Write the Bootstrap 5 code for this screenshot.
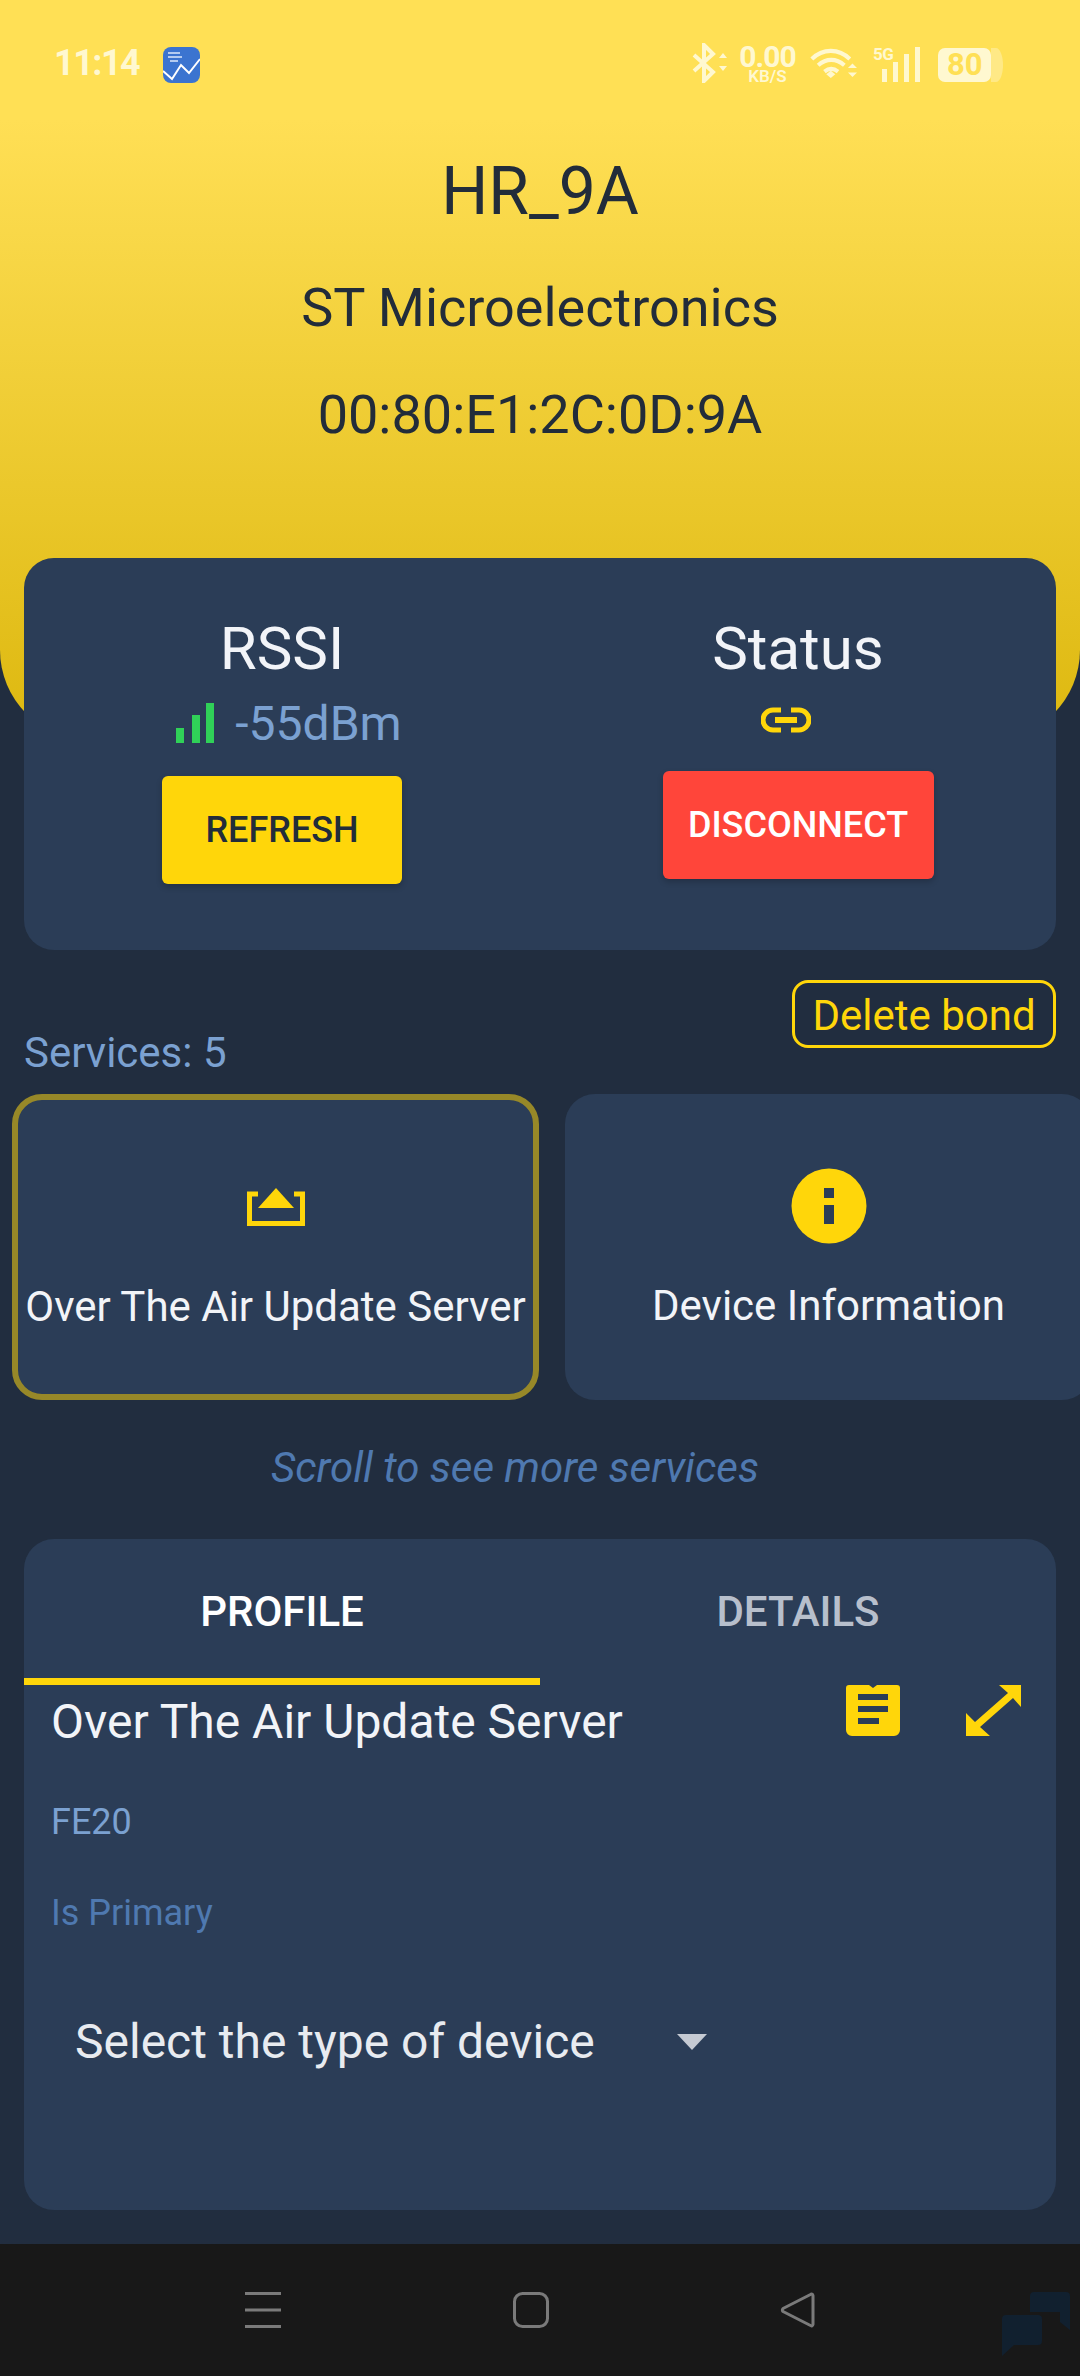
<!DOCTYPE html>
<html lang="en">
<head>
<meta charset="utf-8">
<title>HR_9A</title>
<link href="https://cdn.jsdelivr.net/npm/bootstrap@5.3.0/dist/css/bootstrap.min.css" rel="stylesheet">
<style>
html,body{margin:0;padding:0}
body{width:1080px;height:2376px;overflow:hidden;background:#212d3f;font-family:Roboto,"Liberation Sans",sans-serif;color:#f2f4f8}
.phone{width:1080px;height:2376px;display:flex;flex-direction:column;position:relative}
.hero{height:740px;flex:none;background:linear-gradient(180deg,#ffdf55 120px,#ddb80f 740px);border-radius:0 0 90px 90px}
.statusline{height:120px;background:#ffe055;padding:0 77px 0 54px;color:#fff8d0}
.clock{font-size:36px;font-weight:700;line-height:37px;width:109px;margin-top:45px;letter-spacing:-1.500px}
.appicon{margin-top:47px}
.stat-right{margin-top:43px;height:40px}
.netspeed{width:59px;margin:-1px 13px 0 8px;text-align:center;font-weight:600}
.netspeed b{display:block;font-size:30px;line-height:25px;font-weight:700;margin-top:2px;letter-spacing:-1px}
.netspeed i{display:block;font-size:17px;line-height:14px;font-style:normal;font-weight:600}
.gen{position:relative;width:48px;height:36px;margin:4px 0 0 16px}
.gen span{position:absolute;left:0;top:0;font-size:17px;line-height:15px;font-weight:700;letter-spacing:-.5px}
.batt{margin:5px 0 0 17px;width:65px;height:34px;position:relative}
.batt span{position:absolute;left:9px;top:0;font-size:31px;line-height:34px;font-weight:700;color:#ffe055}
.devname{text-align:center;color:#222c3a}
.devname h1{font-size:66px;font-weight:400;line-height:76px;margin:34px 0 0}
.devname p{font-size:54px;line-height:60px;margin:0}
.devname .vendor{margin-top:48px}
.devname .mac{margin-top:47px}
.panel{background:#2b3d57;border:0;border-radius:30px;margin:0 24px;color:#f2f4f8}
.signal{margin-top:-182px;height:392px;flex:none}
.sig-col{width:516px;text-align:center}
.sig-title{font-size:60px;line-height:68px;margin-top:57px}
.rssi-line{height:50px;margin:16px 0 0 14px}
.rssi-bars{margin-bottom:6px}
.rssi-value{font-size:48px;line-height:50px;color:#7ba1d1;margin-left:21px}
.act{border:0;border-radius:6px;font-size:36px;font-weight:500;line-height:40px;height:108px;box-shadow:0 3px 6px rgba(0,0,0,.2);padding:0}
.act-y{background:#ffd60a;color:#222c3a;width:240px;margin-top:27px}
.act-r{background:#ff453a;color:#fff;width:271px;margin-top:29px}
.link-slot{height:61px;margin-top:-2px;padding-top:26px}
.link-glyph{margin-left:-24px}
.bond-row{padding:30px 24px 0;flex:none;height:144px}
.svc-count{font-size:42px;line-height:44px;color:#7ba1d1;margin-top:51px}
.bond{border:3px solid #ffd60a;border-radius:16px;background:transparent;color:#ffd60a;font-size:42px;line-height:44px;height:68px;width:264px;padding:3px 0 0}
.svc-row{padding-left:12px;gap:26px;height:306px;flex:none}
.svc{flex:0 0 527px;height:306px;background:#2b3d57;border:0;border-radius:30px;text-align:center;color:#f2f4f8;font-size:42px;line-height:44px}
.svc-on{border:6px solid #978828}
.svc-icon{height:76px;display:flex;align-items:center;justify-content:center}
.svc-on .svc-icon{margin-top:69px}
.plain-icon{margin-top:74px}
.svc-label{margin-top:40px}
.hint{font-size:42px;line-height:44px;font-style:italic;color:#4f79b0;text-align:center;margin:46px 0 0 -50px;flex:none;height:93px}
.profile{height:671px;flex:none}
.tabs-bar{height:146px;flex-wrap:nowrap}
.tab-item{width:516px;text-align:center;font-size:42px;font-weight:500;line-height:44px;padding-top:51px;color:#b7bfcc;height:146px}
.tab-on{color:#fff;border-bottom:7px solid #ffd60a}
.prof-body{padding:0 28px 0 27px}
.prof-name{font-size:48px;line-height:56px;margin-top:9px;color:#f2f4f8}
.prof-tools{gap:66px;margin-right:7px}
.prof-uuid{font-size:36px;line-height:42px;color:#7ba1d1;margin-top:51px}
.prof-prim{font-size:36px;line-height:42px;color:#4f79b0;margin-top:49px}
.picker{font-size:48px;line-height:56px;color:#e8ebf0;padding-left:24px;margin-top:80px}
.picker svg{margin-left:82px}
.softkeys{position:absolute;left:0;right:0;bottom:0;height:132px;background:#181818}
.softkeys svg{position:absolute}
.k-menu{left:245px;top:48px}.k-home{left:513px;top:48px}.k-back{left:780px;top:48px}.k-mark{left:1000px;top:48px}
</style>
</head>
<body>
<div class="phone">
  <div class="hero">
    <div class="statusline d-flex justify-content-between">
      <div class="d-flex">
        <div class="clock">11:14</div>
        <svg class="appicon" width="37" height="36" viewBox="0 0 37 36"><rect width="37" height="36" rx="8" fill="#3b74d0"/><path d="M0 24l9 8 9-14 8 8 11-14" fill="none" stroke="#fff" stroke-width="2"/><path d="M5 6h12M5 10h14M7 14h8" stroke="#dce8fa" stroke-width="1.6"/></svg>
      </div>
      <div class="d-flex stat-right">
        <svg width="38" height="40" viewBox="0 0 38 40"><path d="M2 12l19 17-9 9V2l9 9L2 28" fill="none" stroke="#fff8d0" stroke-width="4"/><path d="M27 15l4-5 4 5zM27 23l4 5 4-5z" fill="#fff8d0"/></svg>
        <div class="netspeed"><b>0.00</b><i>KB/S</i></div>
        <svg class="mt-1" width="47" height="33" viewBox="0 0 52 34"><path d="M2 12C14 0 32 0 44 12M9 19c9-8 20-8 29 0M16 26c5-4 10-4 15 0" fill="none" stroke="#fff8d0" stroke-width="4.500"/><path d="M18 29l5-4 5 4-5 4z" fill="#fff8d0"/><path d="M42 22l5-5 5 5zM42 27l5 5 5-5z" fill="#fff8d0"/></svg>
        <div class="gen"><span>5G</span>
          <svg width="48" height="36" viewBox="0 0 48 36"><path d="M10 22h5v13h-5zM21 15h5v20h-5zM32 7h5v28h-5zM43 0h5v35h-5z" fill="#fff8d0" transform="translate(-1 0)"/></svg>
        </div>
        <div class="batt"><svg width="65" height="34" viewBox="0 0 65 34"><rect width="53" height="34" rx="7" fill="#fff8d0"/><path d="M53 0h5c4 0 7 8 7 17s-3 17-7 17h-5z" fill="#fff8d0" opacity=".4"/></svg><span>80</span></div>
      </div>
    </div>
    <div class="devname">
      <h1>HR_9A</h1>
      <p class="vendor">ST Microelectronics</p>
      <p class="mac">00:80:E1:2C:0D:9A</p>
    </div>
  </div>

  <div class="card panel signal d-flex flex-row">
    <div class="sig-col d-flex flex-column align-items-center">
      <div class="sig-title">RSSI</div>
      <div class="rssi-line d-flex align-items-end">
        <svg class="rssi-bars" width="38" height="40" viewBox="0 0 38 40"><path d="M0 25h8v15H0zM16 12h8v28h-8zM30 0h8v40h-8z" fill="#30d158"/></svg>
        <span class="rssi-value">-55dBm</span>
      </div>
      <button class="btn act act-y" type="button">REFRESH</button>
    </div>
    <div class="sig-col d-flex flex-column align-items-center">
      <div class="sig-title">Status</div>
      <div class="link-slot">
        <svg class="d-block link-glyph" width="50" height="26" viewBox="0 0 50 26"><path d="M20 3h-8a10 10 0 0 0 0 20h8M30 3h8a10 10 0 0 1 0 20h-8" fill="none" stroke="#ffd60a" stroke-width="5"/><rect x="14" y="10" width="22" height="6" fill="#ffd60a"/></svg>
      </div>
      <button class="btn act act-r" type="button">DISCONNECT</button>
    </div>
  </div>

  <div class="bond-row d-flex justify-content-between align-items-start">
    <div class="svc-count">Services: 5</div>
    <button class="btn bond" type="button">Delete bond</button>
  </div>

  <div class="svc-row d-flex overflow-hidden">
    <div class="card svc svc-on">
      <div class="svc-icon">
        <svg width="58" height="38" viewBox="0 0 58 38"><path d="M11 6H2.500V35.500H55.500V6H47" fill="none" stroke="#ffd60a" stroke-width="5"/><path d="M29 0L11 20H47z" fill="#ffd60a"/></svg>
      </div>
      <div class="svc-label">Over The Air Update Server</div>
    </div>
    <div class="card svc">
      <div class="svc-icon plain-icon">
        <svg width="76" height="76" viewBox="0 0 76 76"><circle cx="38" cy="38" r="37.500" fill="#ffd60a"/><path d="M33 20h10v10H33zM33 37h10v19H33z" fill="#2b3d57"/></svg>
      </div>
      <div class="svc-label">Device Information</div>
    </div>
  </div>

  <div class="hint">Scroll to see more services</div>

  <div class="card panel profile">
    <div class="nav tabs-bar">
      <div class="tab-item tab-on">PROFILE</div>
      <div class="tab-item">DETAILS</div>
    </div>
    <div class="prof-body">
      <div class="d-flex justify-content-between align-items-start">
        <div class="prof-name">Over The Air Update Server</div>
        <div class="d-flex prof-tools">
          <svg width="54" height="51" viewBox="0 0 54 51"><path d="M3 0H23l4 3 4-3H51a3 3 0 0 1 3 3V45a6 6 0 0 1-6 6H6a6 6 0 0 1-6-6V3a3 3 0 0 1 3-3z" fill="#ffd60a"/><path d="M12 9h30v6H12zM12 21h30v6H12zM12 33h21v6H12z" fill="#2b3d57"/></svg>
          <svg width="55" height="51" viewBox="0 0 55 51"><path d="M33 0H55V22L47 13 14 42 24 51H0V28L9 37 42 8z" fill="#ffd60a"/></svg>
        </div>
      </div>
      <div class="prof-uuid">FE20</div>
      <div class="prof-prim">Is Primary</div>
      <div class="picker d-flex align-items-center">
        <span>Select the type of device</span>
        <svg width="30" height="16" viewBox="0 0 30 16"><path d="M0 0H30L15 16z" fill="#c5cad3"/></svg>
      </div>
    </div>
  </div>

  <div class="softkeys">
    <svg class="k-menu" width="36" height="36" viewBox="0 0 36 36"><path d="M0 1.500H36M0 18H36M0 34.500H36" stroke="#7a7a7a" stroke-width="3"/></svg>
    <svg class="k-home" width="36" height="36" viewBox="0 0 36 36"><rect x="1.500" y="1.500" width="33" height="33" rx="8" fill="none" stroke="#7a7a7a" stroke-width="3"/></svg>
    <svg class="k-back" width="36" height="36" viewBox="0 0 36 36"><path d="M33 3.500a1.500 1.500 0 0 0-2.500-1L3 16.500a2 2 0 0 0 0 3l27.500 14a1.500 1.500 0 0 0 2.500-1z" fill="none" stroke="#7a7a7a" stroke-width="3" stroke-linejoin="round"/></svg>
    <svg class="k-mark" width="75" height="70" viewBox="0 0 75 70"><path d="M30 4a4 4 0 0 1 4-4h32a4 4 0 0 1 4 4v34l-10-8V20H30z" fill="#11202f"/><path d="M2 27a4 4 0 0 1 4-4h32a4 4 0 0 1 4 4v22a4 4 0 0 1-4 4H14L2 64z" fill="#11202f"/></svg>
  </div>
</div>
</body>
</html>
